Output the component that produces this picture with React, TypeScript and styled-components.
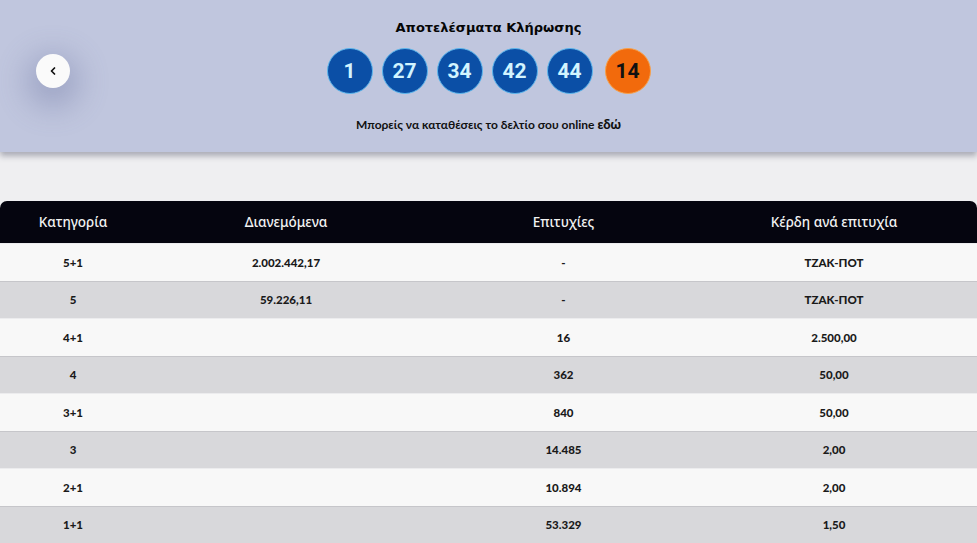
import { ChevronLeft } from 'lucide-react'
import styled, { createGlobalStyle } from 'styled-components'

type Ball = { value: number; bonus?: boolean }

type Row = {
  category: string
  distributed: string
  winners: string
  prize: string
}

const balls: Ball[] = [
  { value: 1 },
  { value: 27 },
  { value: 34 },
  { value: 42 },
  { value: 44 },
  { value: 14, bonus: true },
]

const rows: Row[] = [
  { category: '5+1', distributed: '2.002.442,17', winners: '-', prize: 'TZAK-ΠΟΤ' },
  { category: '5', distributed: '59.226,11', winners: '-', prize: 'TZAK-ΠΟΤ' },
  { category: '4+1', distributed: '', winners: '16', prize: '2.500,00' },
  { category: '4', distributed: '', winners: '362', prize: '50,00' },
  { category: '3+1', distributed: '', winners: '840', prize: '50,00' },
  { category: '3', distributed: '', winners: '14.485', prize: '2,00' },
  { category: '2+1', distributed: '', winners: '10.894', prize: '2,00' },
  { category: '1+1', distributed: '', winners: '53.329', prize: '1,50' },
]

const GlobalStyle = createGlobalStyle`
  body {
    margin: 0;
    background: #efeff1;
    font-family: 'Noto Sans', 'DejaVu Sans', sans-serif;
    color: #111;
  }
`

const Page = styled.div`
  display: flex;
  flex-direction: column;
  height: 543px;
  overflow: hidden;
`

const Header = styled.header`
  display: grid;
  grid-template-columns: 1fr auto 1fr;
  height: 152px;
  background: #c0c6de;
  box-shadow: 0 4px 6px rgba(40, 44, 70, 0.35);
  position: relative;
  z-index: 1;
`

const BackCell = styled.div`
  display: flex;
  align-items: flex-start;
  padding: 54px 0 0 36px;
`

const BackButton = styled.button`
  width: 34px;
  height: 34px;
  border-radius: 50%;
  border: none;
  background: #fafafa;
  display: flex;
  align-items: center;
  justify-content: center;
  padding: 0;
  color: #111;
  box-shadow: 0 10px 30px 10px rgba(90, 100, 150, 0.33);
`

const Draw = styled.div`
  display: flex;
  flex-direction: column;
  align-items: center;
  padding-top: 19px;
`

const Title = styled.h1`
  margin: 0;
  font-family: 'DejaVu Sans', sans-serif;
  font-size: 13px;
  line-height: 18px;
  font-weight: 800;
  color: #050505;
`

const Balls = styled.div`
  display: flex;
  gap: 9px;
  margin-top: 11px;
`

const BallItem = styled.div<{ $bonus?: boolean }>`
  width: 46px;
  height: 46px;
  box-sizing: border-box;
  border-radius: 50%;
  display: flex;
  align-items: center;
  justify-content: center;
  margin-left: ${(p) => (p.$bonus ? '3px' : '0')};
  background: ${(p) => (p.$bonus ? '#f26a0c' : '#0b4fa6')};
  border: 1.5px solid ${(p) => (p.$bonus ? '#f7a14a' : '#5cb6ec')};
  color: ${(p) => (p.$bonus ? '#111' : '#d2f4ff')};
  font-family: 'Roboto', sans-serif;
  font-size: 21px;
  font-weight: 700;
`

const Note = styled.p`
  margin: 22px 0 0;
  font-family: 'Lato', sans-serif;
  font-size: 12px;
  font-weight: 700;
  color: #111;

  b {
    font-weight: 900;
    font-size: 13px;
  }
`

const Table = styled.div`
  margin-top: 49px;
  display: flex;
  flex-direction: column;
`

const Grid = styled.div`
  display: grid;
  grid-template-columns: 146px 280px 275px 1fr;
  align-items: center;
  text-align: center;

  & > :last-child {
    padding-right: 10px;
  }
`

const HeadRow = styled(Grid)`
  height: 42px;
  background: #05050f;
  border-radius: 7px 7px 0 0;
  color: #f2f2f2;
  font-size: 13.5px;
  font-weight: 500;
`

const BodyRow = styled(Grid)<{ $shade: boolean }>`
  height: 37.5px;
  box-sizing: border-box;
  background: ${(p) => (p.$shade ? '#d8d8db' : '#f8f8f8')};
  border-top: 1px solid ${(p) => (p.$shade ? '#c6c6ca' : '#ececee')};
  font-family: 'Lato', sans-serif;
  font-size: 11.5px;
  font-weight: 900;
  color: #1a1a1a;
`

export default function App() {
  return (
    <Page>
      <GlobalStyle />
      <Header>
        <BackCell>
          <BackButton aria-label="Πίσω">
            <ChevronLeft size={12} strokeWidth={3.5} />
          </BackButton>
        </BackCell>
        <Draw>
          <Title>Αποτελέσματα Κλήρωσης</Title>
          <Balls>
            {balls.map((b) => (
              <BallItem key={b.value} $bonus={b.bonus}>
                {b.value}
              </BallItem>
            ))}
          </Balls>
          <Note>
            Μπορείς να καταθέσεις το δελτίο σου online <b>εδώ</b>
          </Note>
        </Draw>
        <div />
      </Header>
      <Table>
        <HeadRow>
          <span>Κατηγορία</span>
          <span>Διανεμόμενα</span>
          <span>Επιτυχίες</span>
          <span>Κέρδη ανά επιτυχία</span>
        </HeadRow>
        {rows.map((r, i) => (
          <BodyRow key={r.category} $shade={i % 2 === 1}>
            <span>{r.category}</span>
            <span>{r.distributed}</span>
            <span>{r.winners}</span>
            <span>{r.prize}</span>
          </BodyRow>
        ))}
      </Table>
    </Page>
  )
}
